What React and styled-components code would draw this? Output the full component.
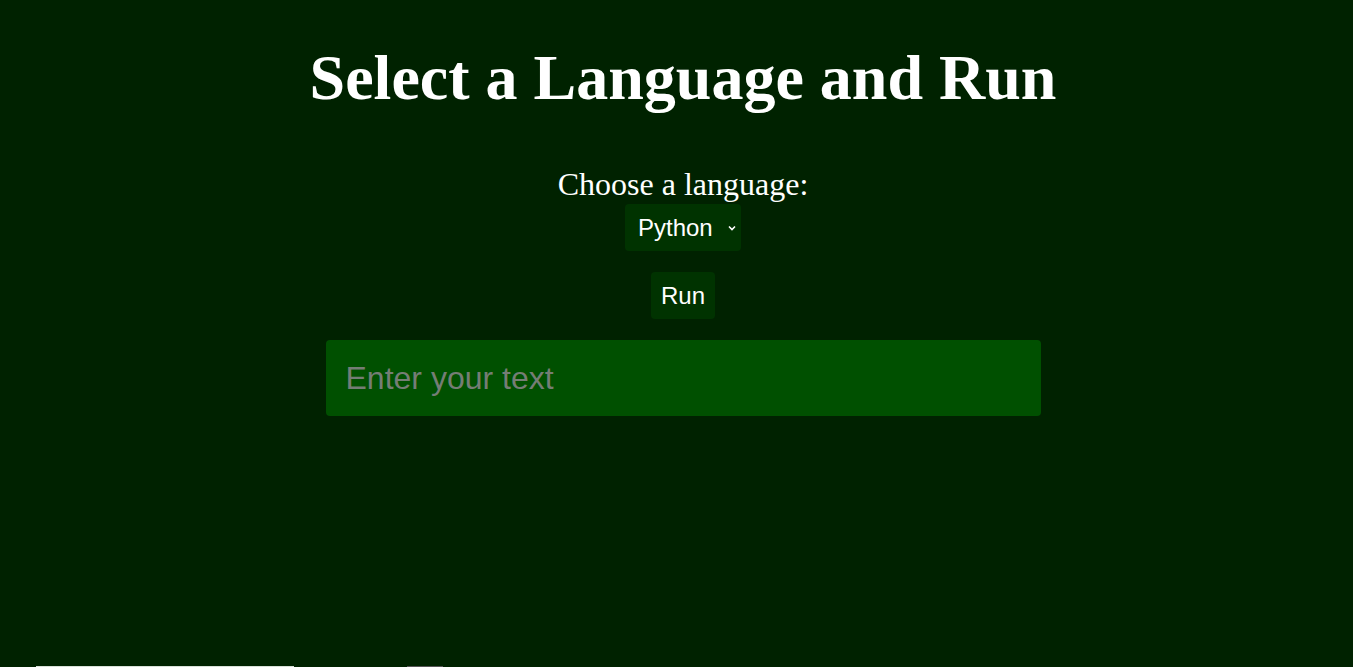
import React from "react";
import styled, { createGlobalStyle } from "styled-components";

const Global = createGlobalStyle`
  html, body { margin: 0; padding: 0; background: #002200; }
  body { font-family: "Liberation Serif", "Times New Roman", serif; color: #ffffff; }
`;

const Page = styled.main`
  display: flex;
  flex-direction: column;
  align-items: center;
  padding: 0 0 0 13px;
  min-height: 667px;
`;

const Title = styled.h1`
  font-family: "Liberation Serif", serif;
  font-weight: 700;
  font-size: 64px;
  line-height: 1;
  margin: 46px 0 0;
`;

const Label = styled.label`
  font-size: 32px;
  line-height: 1;
  margin-top: 58px;
`;

const SelectWrap = styled.div`
  position: relative;
  display: flex;
  margin-top: 4px;
`;

const Select = styled.select`
  appearance: none;
  -webkit-appearance: none;
  font-family: "Liberation Sans", Arial, sans-serif;
  font-size: 24px;
  color: #fff;
  background: #003300;
  border: none;
  border-radius: 4px;
  height: 47px;
  width: 116px;
  padding: 0 0 0 13px;
  outline: none;
`;

const Chevron = styled.svg`
  position: absolute;
  right: 4px;
  top: 20px;
  pointer-events: none;
`;

const RunButton = styled.button`
  font-family: "Liberation Sans", Arial, sans-serif;
  font-size: 24px;
  color: #fff;
  background: #003300;
  border: none;
  border-radius: 4px;
  height: 47px;
  width: 64px;
  margin-top: 21px;
  padding: 0;
`;

const TextInput = styled.input`
  font-family: "Liberation Sans", Arial, sans-serif;
  font-size: 32px;
  color: #fff;
  background: #005000;
  border: none;
  border-radius: 4px;
  width: 715px;
  height: 76px;
  box-sizing: border-box;
  padding: 0 20px;
  margin-top: 21px;
  outline: none;
  &::placeholder { color: #757d75; }
`;

const Footer = styled.div`
  display: flex;
  align-items: flex-start;
  margin-top: 250px;
  height: 40px;
  align-self: stretch;
  margin-left: -13px;
  padding-left: 36px;
  gap: 113px;
`;

const Track = styled.div`
  width: 258px;
  height: 20px;
  background: #d8e0d8;
`;

const Block = styled.div`
  width: 36px;
  height: 20px;
  background: #555555;
`;

export default function App() {
  return (
    <>
      <Global />
      <Page>
        <Title>Select a Language and Run</Title>
        <Label htmlFor="lang">Choose a language:</Label>
        <SelectWrap>
          <Select id="lang" defaultValue="python">
            <option value="python">Python</option>
            <option value="javascript">JavaScript</option>
            <option value="java">Java</option>
          </Select>
          <Chevron width="10" height="8" viewBox="0 0 10 8">
            <path d="M2 2.5 L5 5.5 L8 2.5" fill="none" stroke="#fff" strokeWidth="1.6" />
          </Chevron>
        </SelectWrap>
        <RunButton>Run</RunButton>
        <TextInput placeholder="Enter your text" />
        <Footer>
          <Track />
          <Block />
        </Footer>
      </Page>
    </>
  );
}
